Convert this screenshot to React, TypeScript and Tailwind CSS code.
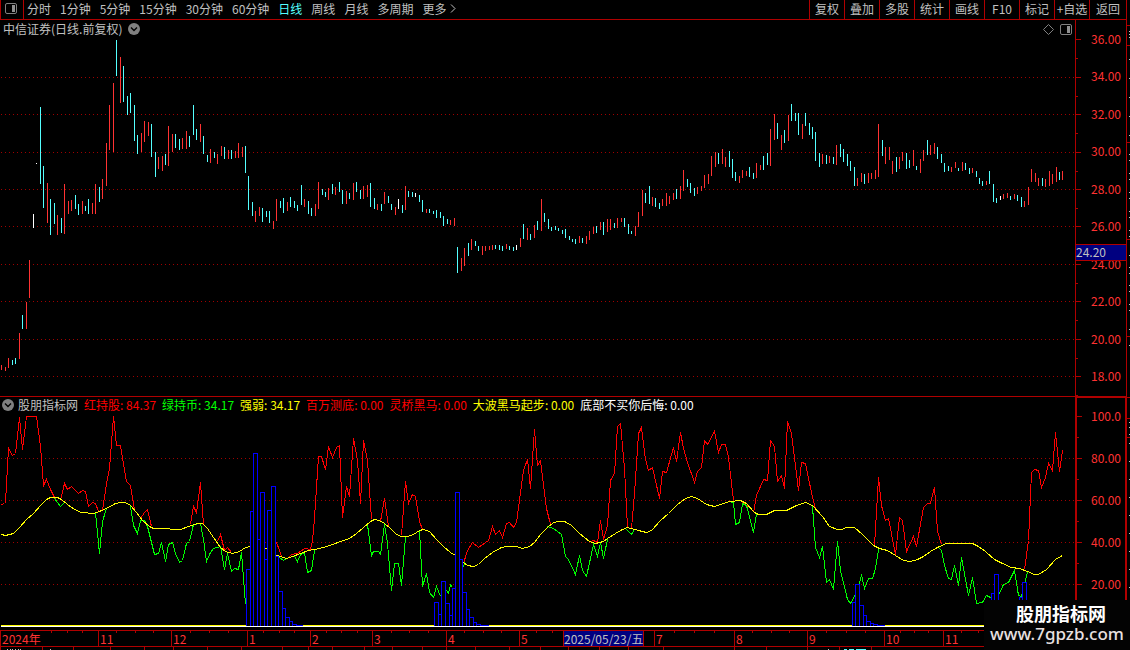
import * as React from "react";

const periods = ["分时", "1分钟", "5分钟", "15分钟", "30分钟", "60分钟", "日线", "周线", "月线", "多周期"];
const tools = ["复权", "叠加", "多股", "统计", "画线", "F10", "标记", "+自选"];

const legend = [
  { label: "红持股", value: "84.37", color: "text-[#ff0000]" },
  { label: "绿持币", value: "34.17", color: "text-[#00ff00]" },
  { label: "强弱", value: "34.17", color: "text-[#ffff00]" },
  { label: "百万测底", value: "0.00", color: "text-[#ff0000]" },
  { label: "灵桥黑马", value: "0.00", color: "text-[#ff0000]" },
  { label: "大波黑马起步", value: "0.00", color: "text-[#ffff00]" },
  { label: "底部不买你后悔", value: "0.00", color: "text-white" },
];

const priceLabels = ["36.00", "34.00", "32.00", "30.00", "28.00", "26.00", "24.00", "22.00", "20.00", "18.00"];
const priceTicks = [39, 77, 114, 152, 189, 226, 264, 301, 339, 376];
const indicatorLabels = ["100.0", "80.00", "60.00", "40.00", "20.00"];
const indicatorTicks = [416, 458, 500, 542, 584];

// month label and where its cell starts
const months = [
  { label: "2024年", x: 0 },
  { label: "11", x: 98 },
  { label: "12", x: 171 },
  { label: "1", x: 247 },
  { label: "2", x: 310 },
  { label: "3", x: 372 },
  { label: "4", x: 446 },
  { label: "5", x: 519 },
  { label: "7", x: 654 },
  { label: "8", x: 734 },
  { label: "9", x: 807 },
  { label: "10", x: 884 },
  { label: "11", x: 943 },
];
const AXIS_END = 1130;
const timeTicks = [
  51, 67, 82, 116, 135, 153, 190, 209, 228, 263, 279, 294, 326, 341, 357, 391, 409, 428, 464, 483, 501, 536, 552, 674,
  694, 714, 752, 771, 789, 826, 846, 865, 900, 914, 928, 961, 978,
];
const stripTicks = [
  0, 42, 73, 110, 144, 173, 207, 241, 282, 308, 332, 364, 392, 422, 446, 475, 509, 540, 568, 599, 628, 663, 734, 766,
  807, 839, 871,
];

// one bar per day: colour (r up, c down, w flat), high and low
const candles = `
r365-370 r367-371 r358-368 c360-365 c358-364 r333-359 c315-329 r302-329 r260-298 w214-228
w163-164 c107-184 c166-208 r183-223 c199-235 c203-224 r215-235 c218-233 r184-234 r201-214
r200-211 c195-209 c204-215 r201-214 c206-211 c199-214 r203-214 r184-214 c187-202 r179-199
r143-186 r105-150 r83-152 c40-76 r57-103 c66-102 c96-115 c93-113 c105-141 c135-154
r133-152 r121-142 r122-136 c124-157 c152-177 r157-169 r156-171 c154-165 r126-166 r134-152
c134-148 c139-150 r138-149 r131-149 c136-147 c105-135 c129-140 r124-142 c136-154 c155-162
r149-163 c152-158 r154-164 r146-156 c147-159 r150-159 c150-159 r151-158 r143-158 r147-157
c146-173 c176-210 c202-216 r211-222 r207-216 c208-222 c211-217 c211-223 r221-229 r199-221
c201-208 c198-213 r202-211 c197-207 c201-208 c205-211 c185-205 r199-207 c201-214 c208-216
r204-216 r182-209 c189-195 c192-197 r188-200 c184-194 r187-195 c182-192 c190-204 r191-204
c193-199 r183-200 c182-192 c190-199 r186-199 r185-197 c183-207 c198-209 r204-210 c204-211
r192-204 c196-203 c204-210 r207-215 w199-209 c205-213 r186-210 c191-197 c192-197 w193-197
c195-202 c200-212 r209-213 c209-213 c211-214 c210-218 c212-218 c216-226 c219-224 r220-225
r218-226 c247-273 r258-271 r248-266 c243-256 r239-250 c241-246 c246-251 r246-255 r246-251
r246-250 r245-250 c245-249 c245-250 c246-251 r244-249 c246-250 c247-251 w245-250 r238-247
c224-239 r228-240 c234-240 r225-238 c221-230 r199-231 c213-222 c219-229 c227-231 c226-230
c228-231 c230-234 c229-238 c236-240 c239-242 c239-244 r236-243 c238-243 r236-244 r231-240
r227-234 c226-233 r222-230 c222-235 r219-232 r219-230 c223-228 r218-228 r218-222 c218-227
c224-234 c231-234 r226-236 r212-227 r190-216 c193-203 c186-204 r197-206 c198-207 c203-209
r199-206 r193-206 r196-204 r193-200 c189-199 r186-199 r170-191 c179-187 c183-193 c188-196
r187-194 r186-191 r175-188 r174-184 r156-176 r152-167 c153-164 r149-164 r157-167 c151-167
c159-178 c172-181 r176-183 r170-178 r171-176 c167-177 c173-179 r163-178 r165-170 c156-170
c153-165 r129-166 r114-140 c123-139 r135-150 c130-143 r115-141 c104-121 c113-121 c113-135
r124-139 c113-126 c123-135 c127-139 c132-161 c153-167 r154-164 c155-164 r156-163 c157-164
r145-165 c144-157 c149-162 c154-166 c161-171 c167-186 r178-186 r173-182 c174-184 r173-183
r173-179 r170-179 r124-177 c140-156 r147-164 r147-160 r161-174 c157-172 r157-169 r152-161
c153-169 c160-168 r150-166 c166-170 r159-173 r150-161 c140-155 r145-155 r143-154 c147-159
c154-163 c163-172 c166-171 r167-172 r162-168 c168-171 r162-171 c163-170 c168-174 r168-173
c171-177 c178-184 c181-186 r181-185 c171-184 c184-202 c198-203 w196-200 r194-199 r193-198
c196-200 r194-199 c195-201 c197-207 r201-207 r187-205 r169-182 r173-182 r178-186 c178-186
r179-187 r171-186 r174-184 r167-182 c172-180 r171-180
`
  .trim()
  .split(/\s+/)
  .map((bar, i) => {
    const [high, low] = bar.slice(1).split("-").map(Number);
    return { x: 1 + Math.ceil(i * 3.4786), high, low, kind: bar[0] };
  });

const candleFill: Record<string, string> = { r: "#ff3232", c: "#54ffff", w: "#ffffff" };

const strengthLine =
  "1,534 5,535 13,533 19,527 26,519 33,513 40,505 46,499 50,497 57,497 61,499 67,504 74,509 81,512 93,513 99,511 108,507 115,503 120,502 125,502 130,505 136,512 142,520 149,526 153,528 167,528 172,529 180,529 188,526 197,523 202,523 207,528 213,537 220,547 225,551 232,553 239,551 245,547 250,546 257,546 266,548 276,555 280,556 286,558 292,556 300,553 308,550 314,549 323,547 332,544 340,541 349,538 356,533 363,527 370,521 374,519 379,520 384,523 390,528 395,533 400,536 407,536 413,534 419,530 423,529 429,531 436,539 443,546 450,552 455,555 463,562 467,565 473,566 478,564 484,558 492,552 501,547 507,546 516,546 522,548 529,546 534,542 540,534 547,527 553,522 558,521 564,521 571,525 579,533 589,541 595,543 603,541 607,538 615,533 622,529 627,527 638,530 646,532 651,530 660,520 668,513 677,504 685,498 691,496 697,498 706,504 714,506 723,503 729,501 740,500 746,503 754,512 758,514 766,514 774,510 786,510 796,505 805,502 812,505 822,516 829,526 837,529 841,529 846,527 854,527 863,535 873,545 879,548 887,550 895,555 903,560 910,561 917,559 923,556 930,551 937,547 946,543 972,543 978,546 985,551 994,559 1002,563 1011,567 1019,568 1027,571 1034,574 1038,574 1046,569 1055,559 1062,555";

const redLines = [
  "1,504 4,503 5,502 8,448 12,455 15,453 19,417 22,449 26,416 36,416 40,446 43,485 46,479 50,489 54,497 56,500",
  "60,500 64,483 67,489 71,486 78,493 82,490 85,491 88,506 92,502 95,503 98,511",
  "102,510 106,483 109,468 113,416 116,445 120,445 126,481 130,485 134,509",
  "140,518 144,512 147,509 151,526",
  "190,524 193,506 196,512 200,482 203,524",
  "217,541 220,534 224,550 227,547 231,552",
  "276,542 279,550 281,556",
  "287,558 291,554 297,553 304,548 310,549 312,540 314,518 318,456 321,456 325,469 328,446 332,457 336,447 339,445 342,517 346,486 349,496 353,438 357,460 360,503 363,440 367,460 371,519",
  "380,521 384,498 388,526",
  "401,535 405,481 408,503 412,494 415,496 419,521 422,529",
  "463,563 467,550 472,542 478,547 488,540 492,526 495,534 499,530 502,537 506,523 509,522 513,527 516,522 523,470 527,459 530,488 534,429 537,465 540,460 546,508 549,520 551,525",
  "590,541 593,540 597,542 600,520 603,539 607,525 610,480 614,473 617,426 620,423 624,468 627,527",
  "631,528 634,493 638,433 641,427 645,459 648,470 652,467 659,498 662,471 666,472 673,447 676,461 680,432 683,448 687,462 694,482 697,471 701,467 704,440 707,444 714,431 718,452 721,444 725,444 728,457 733,500",
  "742,502 749,507",
  "753,512 756,495 763,479 767,480 770,440 774,446 777,481 781,475 784,488 787,421 791,433 798,490 801,462 805,463 812,497 815,508",
  "874,545 878,477 881,505 885,520 888,518 895,554 899,517 902,520 906,551 913,536 916,546 923,507 927,503 930,503 934,487 937,531 941,544",
  "1024,569 1028,540 1031,472 1034,469 1038,470 1041,487 1045,477 1048,463 1052,470 1055,432 1059,471 1062,450",
];

const greenLines = [
  "54,498 57,502 60,506 64,502",
  "95,512 99,553 102,521 106,508",
  "130,506 133,525 137,533 140,520 144,520 147,526 154,554 158,553 161,542 165,561 168,544 172,542 175,553 179,562 182,560 186,543 189,541 193,524 200,523 203,539 206,561 210,552 213,548 220,546 224,569 227,553 231,571 234,568 238,569 241,552 245,604",
  "279,557 283,560 287,557",
  "294,556 297,561 300,554 304,552 307,572 311,570 314,550",
  "367,524 371,555 373,551 378,551 380,554 384,524 387,543 391,590 394,563 398,563 401,585 405,537",
  "419,530 422,586 426,573 429,592 433,597 436,586 440,596",
  "446,590 448,593 450,584 452,587",
  "463,567 464,562",
  "547,526 553,528 561,534 565,556 568,559 575,574 579,555 582,570 586,576 593,544 597,556 600,542 603,558 607,539",
  "625,528 631,534 634,529",
  "729,501 733,502 735,524 739,522 742,503 746,505 753,532 756,514",
  "812,506 815,547 819,557 822,546 826,582 829,579 833,589 837,541 840,570 847,599 850,603 854,596 858,587 861,574 864,588 868,578 872,578 875,568 878,549",
  "938,547 941,550 944,565 948,578 951,579 954,565 958,585 961,557 968,595 972,577 976,603 982,602 986,595 990,597 993,593 999,593 1003,584 1008,582 1014,570 1018,595 1021,596 1027,572",
];

// left, right, top
const volumeBars = [
  [246, 250, 569], [250, 253, 511], [253, 257, 453], [257, 260, 539], [260, 264, 492], [264, 267, 559],
  [267, 271, 510], [271, 275, 486], [275, 278, 556], [278, 282, 591], [282, 285, 608], [285, 289, 617],
  [289, 292, 621], [292, 296, 624], [296, 302, 625],
  [434, 438, 602], [438, 441, 614], [441, 445, 581], [445, 449, 603], [449, 452, 615], [452, 455, 588],
  [455, 459, 492], [459, 462, 559], [462, 466, 592], [466, 469, 609], [469, 473, 617], [473, 476, 622],
  [476, 480, 624], [480, 488, 625],
  [852, 855, 602], [855, 859, 584], [859, 863, 605], [863, 866, 615], [866, 870, 621], [870, 873, 623],
  [873, 877, 624], [877, 884, 625],
  [991, 994, 593], [994, 998, 574], [1019, 1022, 597], [1022, 1026, 582],
];

function ChevronBadge() {
  return (
    <svg width="12" height="12" viewBox="0 0 12 12" aria-hidden="true">
      <circle cx="6" cy="6" r="6" fill="#808080" />
      <path d="M3 4.5 6 7.5 9 4.5" fill="none" stroke="#000" strokeWidth="1.4" />
    </svg>
  );
}

function PanelIcon() {
  return (
    <svg width="12" height="11" viewBox="0 0 12 11" aria-hidden="true">
      <rect x="0.5" y="0.5" width="11" height="10" rx="1.5" fill="none" stroke="#808080" />
      <rect x="7" y="2" width="3" height="7" fill="#909090" />
    </svg>
  );
}

function Header() {
  const [active, setActive] = React.useState("日线");
  return (
    <header className="flex h-5 shrink-0 text-[#c0c0c0]">
      <div className="flex flex-1 border-b border-[#b00000]">
        <button aria-label="侧栏" className="flex w-6 items-center border-x border-[#b00000] pb-[2px] pl-1">
          <PanelIcon />
        </button>
        <nav className="ml-[3px] flex items-center gap-[9px] whitespace-nowrap pb-[2px]">
          {periods.map((p) => (
            <button key={p} onClick={() => setActive(p)} className={p === active ? "text-[#54ffff]" : undefined}>
              {p}
            </button>
          ))}
          <button className="flex items-center gap-1">
            更多
            <svg width="6" height="9" viewBox="0 0 6 9" fill="none" stroke="#c0c0c0" aria-hidden="true">
              <path d="M1 0.5 5 4.5 1 8.5" />
            </svg>
          </button>
        </nav>
      </div>
      <div className="flex whitespace-nowrap border-b border-r border-[#b00000]">
        {tools.map((t) => (
          <button key={t} className="w-[35px] border-l border-[#b00000] pb-[2px]">
            {t}
          </button>
        ))}
        <button className="w-[37px] border-l border-[#b00000] pb-[2px]">返回</button>
      </div>
      <div className="w-[3px]" />
    </header>
  );
}

function GridLines({ ys }: { ys: number[] }) {
  return (
    <g stroke="#a00000" strokeDasharray="1 3">
      {ys.map((y) => (
        <line key={y} x1="1" x2="1075" y1={y + 0.5} y2={y + 0.5} />
      ))}
    </g>
  );
}

function AxisTicks({ ys, viewBox }: { ys: number[]; viewBox: string }) {
  const step = (ys[1] - ys[0]) / 2;
  return (
    <svg viewBox={viewBox} preserveAspectRatio="none" className="h-full w-[5px]" shapeRendering="crispEdges" aria-hidden="true">
      {ys.map((y) => (
        <g key={y} fill="#b00000">
          <rect x="0" y={y} width="5" height="1" />
          <rect x="0" y={Math.round(y + step)} width="2" height="1" />
        </g>
      ))}
    </svg>
  );
}

function PricePanel() {
  return (
    <section className="flex min-h-0 flex-[376]">
      <div className="relative min-w-0 flex-1">
        <svg viewBox="0 20 1075 376" preserveAspectRatio="none" className="absolute inset-0 h-full w-full" shapeRendering="crispEdges">
          <GridLines ys={priceTicks.slice(1)} />
          {candles.map((c) => (
            <rect key={c.x} x={c.x} y={c.high} width="1" height={c.low - c.high} fill={candleFill[c.kind]} />
          ))}
        </svg>
        <div className="relative flex h-[18px] items-center gap-[6px] px-[3px] text-[#c0c0c0]">
          <h1>中信证券(日线.前复权)</h1>
          <button aria-label="展开">
            <ChevronBadge />
          </button>
          <button aria-label="标记点" className="ml-auto">
            <svg width="11" height="11" viewBox="0 0 11 11" fill="none" stroke="#808080" aria-hidden="true">
              <path d="M5.5 0.5 10.5 5.5 5.5 10.5 0.5 5.5Z" />
            </svg>
          </button>
          <button aria-label="右侧栏">
            <PanelIcon />
          </button>
        </div>
      </div>
      <div className="relative flex w-[52px] border-x border-[#b00000]">
        <AxisTicks ys={priceTicks} viewBox="0 20 5 376" />
        <ul className="flex flex-1 flex-col justify-between pb-3 pr-[5px] pt-[11px] text-right leading-4 text-[#ff3232]">
          {priceLabels.map((l) => (
            <li key={l}>{l}</li>
          ))}
        </ul>
        <div className="absolute inset-x-0 top-[224px] h-[17px] border-y border-[#b00000] bg-[#000080] leading-[13px] text-[#c0c0c0]">
          24.20
        </div>
      </div>
    </section>
  );
}

function IndicatorPanel() {
  return (
    <section className="flex min-h-0 flex-[234]">
      <div className="relative min-w-0 flex-1 border-t border-[#b00000]">
        <svg viewBox="0 397 1075 233" preserveAspectRatio="none" className="absolute inset-0 h-full w-full" shapeRendering="crispEdges">
          <GridLines ys={indicatorTicks.slice(1)} />
          <rect x="1" y="625" width="1074" height="1" fill="#ffff00" />
          <g fill="none" transform="translate(0.5 0.5)">
            {redLines.map((points) => (
              <polyline key={points} points={points} stroke="#ff0000" />
            ))}
            {greenLines.map((points) => (
              <polyline key={points} points={points} stroke="#00ff00" />
            ))}
            <polyline points={strengthLine} stroke="#ffff00" />
            {volumeBars.map(([left, right, top]) => (
              <rect key={left} x={left} y={top} width={right - left} height={626 - top} fill="#000" stroke="#0000ff" />
            ))}
          </g>
          <rect x="1" y="626" width="1074" height="1" fill="#fff" />
        </svg>
        <div className="relative flex h-4 items-center gap-[6px] whitespace-nowrap pl-[2px]">
          <button aria-label="指标菜单">
            <ChevronBadge />
          </button>
          <h2 className="-ml-[2px] text-[#c0c0c0]">股朋指标网</h2>
          {legend.map((l) => (
            <span key={l.label} className={l.color}>
              {l.label}: {l.value}
            </span>
          ))}
        </div>
      </div>
      <div className="flex w-[52px] border-x-2 border-t-2 border-[#b00000]">
        <AxisTicks ys={indicatorTicks} viewBox="0 398 5 232" />
        <ul className="flex flex-1 flex-col justify-between pb-[38px] pr-1 pt-[10px] text-right leading-4 text-[#ff3232]">
          {indicatorLabels.map((l) => (
            <li key={l}>{l}</li>
          ))}
        </ul>
      </div>
    </section>
  );
}

function TimeAxis() {
  return (
    <div className="relative flex h-[17px] shrink-0 border-y border-[#b00000] text-[#ff3232]">
      <svg viewBox="0 0 1130 2" preserveAspectRatio="none" className="absolute left-0 top-0 h-[2px] w-full" shapeRendering="crispEdges" aria-hidden="true">
        {timeTicks.map((x) => (
          <rect key={x} x={x} y="0" width="1" height="2" fill="#b00000" />
        ))}
      </svg>
      {months.map((m, i) => (
        <div
          key={m.x}
          className="shrink-0 border-l border-[#b00000] pl-px leading-[15px] first:border-l-0"
          style={{ width: `${(((months[i + 1]?.x ?? AXIS_END) - m.x) / AXIS_END) * 100}%` }}
        >
          {m.label}
        </div>
      ))}
      <div
        className="absolute inset-y-0 whitespace-nowrap border-x border-[#b00000] bg-[#000080] leading-[15px] text-[#c0c0c0]"
        style={{ left: `${(563 / AXIS_END) * 100}%` }}
      >
        2025/05/23/五
      </div>
    </div>
  );
}

// top edge of the panel that continues below the window
function BottomStrip() {
  return (
    <svg viewBox="0 0 1130 3" preserveAspectRatio="none" className="h-[3px] w-full shrink-0" shapeRendering="crispEdges" aria-hidden="true">
      {stripTicks.map((x) => (
        <rect key={x} x={x} y="0" width="1" height="3" fill="#b00000" />
      ))}
      {[7, 10, 12, 15, 18, 20, 50, 828].map((x) => (
        <rect key={x} x={x} y="2" width="1" height="1" fill="#c0c0c0" />
      ))}
      <path d="M844 2h3v1h-3zM849 2h5v1h-5zM856 2h10v1h-10z" fill="#54ffff" />
    </svg>
  );
}

// left edge of the quote panel beside the chart
function RightEdge() {
  return (
    <svg viewBox="0 0 3 650" preserveAspectRatio="none" className="absolute right-0 top-0 h-full w-[3px]" shapeRendering="crispEdges" aria-hidden="true">
      {[25, 45, 142, 239, 336, 397, 418, 437].map((y) => (
        <rect key={y} x="0" y={y} width="3" height="1" fill="#b00000" />
      ))}
      {[
        31, 34, 37, 59, 78, 97, 116, 135, 154, 160, 173, 179, 192, 198, 211, 217, 230, 236, 255, 267, 273, 285, 291,
        304, 310, 329, 345, 422, 427, 434, 443, 461, 479, 497, 515, 533, 551, 569, 587,
      ].map((y) => (
        <rect key={y} x="2" y={y} width="1" height="1" fill="#c0c0c0" />
      ))}
    </svg>
  );
}

export default function App() {
  return (
    <div className="relative flex h-screen flex-col overflow-hidden bg-black font-['Noto_Sans_CJK_SC',sans-serif] text-xs">
      <Header />
      <main className="flex min-h-0 flex-1 flex-col">
        <div className="flex min-h-0 flex-1 flex-col pr-[3px]">
          <PricePanel />
          <IndicatorPanel />
        </div>
        <TimeAxis />
        <BottomStrip />
      </main>
      <RightEdge />
      <div className="absolute bottom-0 right-0 flex h-[50px] w-[146px] flex-col items-center whitespace-nowrap bg-[#030303] text-white">
        <p className="pl-2 text-lg font-bold leading-[26px]">股朋指标网</p>
        <p className="font-['Noto_Sans',sans-serif] text-[17px] font-medium leading-4 text-[#e8e0e0]">www.7gpzb.com</p>
      </div>
    </div>
  );
}
